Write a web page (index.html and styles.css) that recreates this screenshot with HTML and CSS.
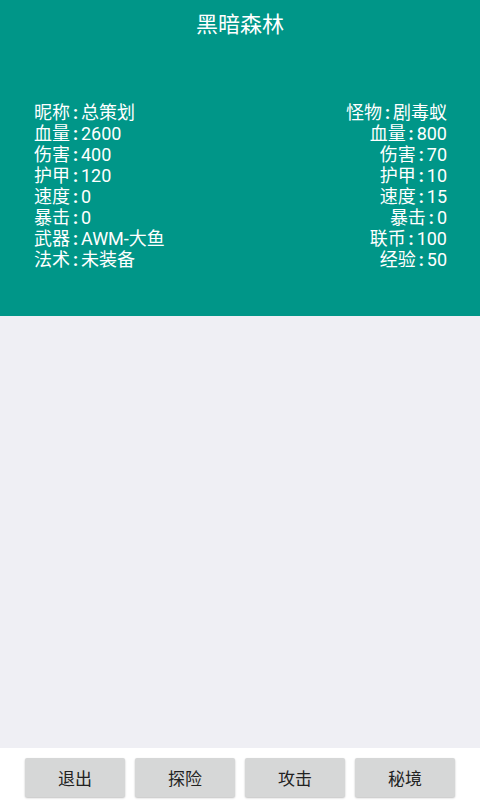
FILE: index.html
```html
<!DOCTYPE html>
<html lang="zh-CN">
<head>
<meta charset="utf-8">
<title>黑暗森林</title>
<link rel="stylesheet" href="styles.css">
</head>
<body>
<div class="screen">
  <header class="header">
    <div class="title">黑暗森林</div>
    <div class="stats">
      <div class="col col-left">
        <div class="row">昵称<span class="colon">:</span>总策划</div>
        <div class="row">血量<span class="colon">:</span>2600</div>
        <div class="row">伤害<span class="colon">:</span>400</div>
        <div class="row">护甲<span class="colon">:</span>120</div>
        <div class="row">速度<span class="colon">:</span>0</div>
        <div class="row">暴击<span class="colon">:</span>0</div>
        <div class="row">武器<span class="colon">:</span>AWM-大鱼</div>
        <div class="row">法术<span class="colon">:</span>未装备</div>
      </div>
      <div class="col col-right">
        <div class="row">怪物<span class="colon">:</span>剧毒蚁</div>
        <div class="row">血量<span class="colon">:</span>800</div>
        <div class="row">伤害<span class="colon">:</span>70</div>
        <div class="row">护甲<span class="colon">:</span>10</div>
        <div class="row">速度<span class="colon">:</span>15</div>
        <div class="row">暴击<span class="colon">:</span>0</div>
        <div class="row">联币<span class="colon">:</span>100</div>
        <div class="row">经验<span class="colon">:</span>50</div>
      </div>
    </div>
  </header>
  <main class="content"></main>
  <footer class="actions">
    <button class="btn">退出</button>
    <button class="btn">探险</button>
    <button class="btn">攻击</button>
    <button class="btn">秘境</button>
  </footer>
</div>
</body>
</html>
```

FILE: styles.css
```css
html, body {
  margin: 0;
  padding: 0;
  height: 100%;
}
body {
  font-family: Roboto, "Noto Sans CJK SC", sans-serif;
  background: #efeff4;
}
.screen {
  display: flex;
  flex-direction: column;
  height: 800px;
  width: 480px;
}
.header {
  background: #009688;
  color: #ffffff;
  height: 316px;
  flex: none;
  box-sizing: border-box;
}
.title {
  height: 50px;
  line-height: 50px;
  text-align: center;
  font-size: 22px;
}
.stats {
  display: flex;
  justify-content: space-between;
  padding: 52px 33px 0 34px;
}
.col {
  display: flex;
  flex-direction: column;
}
.col-right {
  text-align: right;
}
.row {
  font-size: 18px;
  line-height: 21px;
  height: 21px;
  white-space: nowrap;
}
.colon {
  display: inline-block;
  width: 11px;
  text-align: center;
  font-weight: bold;
}
.content {
  flex: 1;
  background: #efeff4;
}
.actions {
  flex: none;
  height: 52px;
  background: #ffffff;
  display: flex;
  justify-content: center;
  gap: 10px;
  padding-top: 10px;
  box-sizing: border-box;
}
.btn {
  width: 100px;
  height: 39px;
  border: none;
  border-radius: 2px;
  background: #d6d7d7;
  box-shadow: 0 1px 2px rgba(0,0,0,0.25);
  font-family: Roboto, "Noto Sans CJK SC", sans-serif;
  font-size: 17px;
  color: #222222;
  padding: 0;
}
```
